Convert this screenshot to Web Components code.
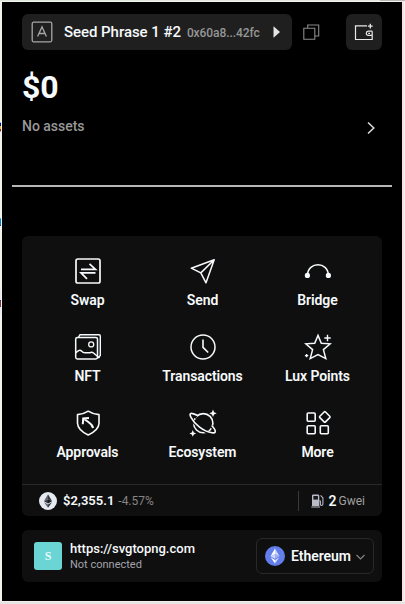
<!DOCTYPE html>
<html lang="en">
<head>
<meta charset="utf-8">
<title>Wallet</title>
<style>
html,body{margin:0;height:100%;overflow:hidden;background:#f0f0eb}
body{font-family:Roboto,"Liberation Sans",sans-serif;color:#f7fafc}
</style>
</head>
<body>
<wallet-popup>
  <account-bar name="Seed Phrase 1 #2" address="0x60a8...42fc"></account-bar>
  <balance-summary amount="$0">No assets</balance-summary>
  <action-panel>
    <action-item icon="swap">Swap</action-item>
    <action-item icon="send">Send</action-item>
    <action-item icon="bridge">Bridge</action-item>
    <action-item icon="nft">NFT</action-item>
    <action-item icon="clock">Transactions</action-item>
    <action-item icon="star">Lux Points</action-item>
    <action-item icon="shield">Approvals</action-item>
    <action-item icon="planet">Ecosystem</action-item>
    <action-item icon="more">More</action-item>
    <market-strip slot="footer" price="$2,355.1" change="-4.57%" gas="2"></market-strip>
  </action-panel>
  <site-connection site="https://svgtopng.com" state="Not connected" chain="Ethereum"></site-connection>
</wallet-popup>
<script>
const S = (w, h, vb, body) => `<svg width="${w}" height="${h}" viewBox="${vb}" fill="none" stroke="currentColor">${body}</svg>`;
const define = (tag, render) => customElements.define(tag, class extends HTMLElement {
  constructor() { super(); this.attachShadow({mode: 'open'}); }
  connectedCallback() { this.shadowRoot.innerHTML = render(n => this.getAttribute(n)); }
});

const icons = {
  swap: '<rect x="2" y="2" width="24" height="24" rx="1.8" stroke-width="1.7"/><path d="M7 12.4H21.5L15.5 6.8M21.5 15.8H7L13 21.9" stroke-width="1.7"/>',
  send: '<path d="M25.2 2.8L2.3 11.2L11.8 15.9L17 25.8ZM11.8 15.9L25 3" stroke-width="1.5" stroke-linejoin="round"/>',
  bridge: '<path d="M3.4 18.4C3.9 4.2 24 4.2 24.4 18.4" stroke-width="1.5"/><circle cx="3.4" cy="18.4" r="2.6" fill="currentColor" stroke="none"/><circle cx="24.4" cy="18.4" r="2.6" fill="currentColor" stroke="none"/>',
  nft: '<path d="M4.6 4.2L6 1.7H25Q26.3 1.7 26.3 3V22.5L24 25" stroke-width="1.4"/><rect x="1.7" y="4.5" width="21.8" height="21.5" rx="1.7" stroke-width="1.5"/><circle cx="17.2" cy="11.4" r="2.5" stroke-width="1.3"/><path d="M1.8 19.7L4.6 17.6Q6.2 16.7 7.6 18.1Q9.3 20.3 12 19.7H15.8Q18 18.7 19.5 20L25.5 25" stroke-width="1.5"/>',
  clock: '<circle cx="14" cy="14" r="12" stroke-width="1.5"/><path d="M14 6.5V14.3L19.2 19.5" stroke-width="1.6"/>',
  star: '<path d="M14 2.4L17.3 10.3L26.3 10.8L19.4 16.6L21.8 25.6L14 21.5L6.2 25.6L8.6 16.6L1.7 10.8L10.7 10.3Z" stroke-width="1.5"/><path d="M23.5 1.8V8.2M20.3 5H26.7M2.6 20.9V24.3M.9 22.6H4.3" stroke-width="1.4"/>',
  shield: '<path d="M14.2 2.2C11 4.4 7.8 5.3 3.5 5.6V14.2C3.8 20.2 8.5 23.3 14.2 26C20 23.3 24.8 20.2 25 14.2V5.6C20.8 5.3 17.4 4.4 14.2 2.2Z" stroke-width="1.6" stroke-linejoin="round"/><path d="M8.8 15.3L9.2 9.5L15 8.9M9.2 9.5L14 12.8Q18.5 15.8 19.1 19" stroke-width="2"/>',
  planet: '<circle cx="14.3" cy="14.2" r="9.6" stroke-width="1.6"/><path d="M7.5 8.6C1.8 4.7-.5 3.9 2 8.8C5 14.8 14 23 23 24.2Q30 25 22.6 17.4" stroke="#0f0f0f" stroke-width="3"/><path d="M8.8 6.6C1.6 3.3-.4 3.5 2 8.4C5 14.4 14 22.6 23 23.8Q29.6 24.6 23 16.8" stroke-width="1.6"/><path d="M24 .6L25.1 3.2L27.7 4.3L25.1 5.4L24 8L22.9 5.4L20.3 4.3L22.9 3.2ZM3.8 21L4.8 23.4L7.2 24.4L4.8 25.4L3.8 27.8L2.8 25.4L.4 24.4L2.8 23.4Z" fill="currentColor" stroke="none"/>',
  more: '<g stroke-width="1.6"><rect x="3.2" y="4" width="8" height="8.2" rx="1"/><rect x="3.2" y="16.8" width="8" height="8" rx="1"/><rect x="16.3" y="16.8" width="8" height="8" rx="1"/><rect x="16.8" y="3.9" width="8" height="8" rx="1" transform="rotate(45 20.8 7.9)"/></g>'
};

const ether = (size, disc, top, mid, low) => S(size, size, '0 0 20 20',
  `<g stroke="none"><circle cx="10" cy="10" r="10" fill="${disc}"/><path d="M10 2.4L5.5 10.2L10 8.2Z" fill="${top}"/><path d="M10 2.4L14.5 10.2L10 8.2Z" fill="${mid}"/><path d="M10 8.2L5.5 10.2L10 12.8Z" fill="${mid}"/><path d="M10 8.2L14.5 10.2L10 12.8Z" fill="${low}"/><path d="M5.5 11.3L10 17.6V14Z" fill="${top}"/><path d="M14.5 11.3L10 17.6V14Z" fill="${mid}"/></g>`);

define('wallet-popup', () => `<style>
  :host{display:block;box-sizing:border-box;position:relative;width:405px;height:604px;padding:2px 3px 3px 2px;
    background:linear-gradient(#f5e9e9,#f5e9e9) 0 601px/405px 1px no-repeat,linear-gradient(#e1e3e0,#e8e8e5) 0 602px/405px 2px no-repeat,linear-gradient(90deg,#dde6da 0 148px,#e2e6df 148px 380px,#b7b7b7 380px) 0 0/405px 1px no-repeat,linear-gradient(#fbdfe3,#fbdfe3) 402px 0/2px 604px no-repeat,#f3f2ed}
  main{box-sizing:border-box;height:599px;background:#000;padding:12px 20px 0;display:flex;flex-direction:column}
  i{position:absolute;left:0;width:1px}
  .a{top:122px;height:10px;background:linear-gradient(#7bc7eb 0 1px,#001a80 1px 4px,#f5b52c 4px 7px,#b51a00 7px 9px,#72b9d6 9px)}
  .b{top:218px;height:8px;background:linear-gradient(#4eb2df 0 1px,#0583c6 1px 7px,#173c72 7px)}
  .c{top:289px;height:26px;background:linear-gradient(#e6e9f1 0 11px,#342a66 11px 12px,#873a41 12px 18px,#e6e9f1 18px)}
  </style><main><slot></slot></main><i class="a"></i><i class="b"></i><i class="c"></i>`);

define('account-bar', a => `<style>
  :host{display:flex;align-items:center;height:36px}
  .pill{box-sizing:border-box;width:270px;height:36px;border-radius:6px;background:#1f1f1f;display:flex;align-items:center;padding:0 11px 0 9px}
  svg{display:block;flex:none}
  .name{font-size:15px;font-weight:500;margin-left:11px;white-space:nowrap;letter-spacing:-.05px}
  .addr{font-size:12px;font-weight:500;color:#969696;margin:1px auto 0 6px;letter-spacing:-.08px}
  .copy{margin-left:11px;color:#8a8a8a}
  .add{width:36px;height:36px;border-radius:6px;background:#1f1f1f;margin-left:auto;display:grid;place-items:center;color:#e8e8e8}
  </style><div class="pill">
  ${S(22,22,'0 0 22 22','<g stroke="#a6a6a6"><rect x="1.2" y="1.2" width="19.6" height="19.6" rx="1.5" stroke-width="1.3"/><path d="M6.6 15.4L11 5.9L15.4 15.4M8.2 12.5H13.8" stroke-width="1.3"/></g>')}
  <span class="name">${a('name')}</span><span class="addr">${a('address')}</span>
  ${S(9,14,'0 0 9 14','<path d="M1.5 1.2L8 7L1.5 12.8Z" fill="#e4e4e4" stroke="none"/>')}</div>
  <span class="copy">${S(17,17,'0 0 17 17','<path d="M.8 4.2H11.8V15.2H.8ZM4.7 4V1H15.7V12H12" stroke-width="1.1"/>')}</span>
  <span class="add">${S(20,20,'0 0 20 20','<path d="M13 3.9H1.5V17.5H18.2V9.2M18.2 9.2H14.4Q12.3 9.4 12.3 11.3Q12.3 13.4 14.4 13.4H18" stroke-width="1.2"/><path d="M14.2 11.3H16M16.3 1.8V6.6M13.9 4.2H18.7" stroke-width="1.3"/>')}</span>`);

define('balance-summary', a => `<style>
  :host{display:block;height:186px}
  .amount{font-size:32px;font-weight:700;line-height:38px;margin-top:18px;letter-spacing:-.2px}
  .row{display:flex;align-items:center;justify-content:space-between;height:20px;margin-top:10px;padding-right:6px;font-size:14px;font-weight:500;letter-spacing:-.02px;color:#989898}
  svg{display:block;margin-top:3px;color:#ddd}
  hr{border:0;height:2px;background:#b6b6b6;margin:49px -10px 0}
  </style><div class="amount">${a('amount')}</div>
  <div class="row"><slot></slot>${S(10,14,'0 0 10 14','<path d="M2 1.5L7.8 7L2 12.5" stroke-width="1.5"/>')}</div><hr>`);

define('action-panel', () => `<style>
  :host{display:flex;flex-direction:column;box-sizing:border-box;height:280px;border-radius:6px;background:#0f0f0f}
  .grid{display:grid;grid-template-columns:repeat(3,115px);grid-auto-rows:76px;justify-content:center;padding-top:20px;height:228px}
  </style><div class="grid"><slot></slot></div><slot name="footer"></slot>`);

define('action-item', a => `<style>
  :host{display:flex;flex-direction:column;align-items:center;padding:1px 0 0 1px;font-size:14px;font-weight:600;line-height:18px;letter-spacing:-.1px}
  svg{display:block;margin:0 0 6px}
  </style>${S(28,28,'0 0 28 28',icons[a('icon')])}<span><slot></slot></span>`);

define('market-strip', a => `<style>
  :host{display:flex;align-items:center;box-sizing:border-box;height:32px;border-top:1px solid #292929;padding:0 17px;font-size:13px}
  svg{display:block}
  b{font-weight:600;margin-left:6px;font-size:13px}
  .chg{font-size:12px;color:#858585;margin-left:4px}
  .gas{margin-left:auto;height:20px;border-left:1px solid #3a3a3a;display:flex;align-items:center;padding-left:12px}
  .gas span{font-size:12px;color:#a0a0a0;margin-left:2px}
  .gas b{margin-left:5px;font-size:14px}
  </style>${ether(18,'#e5eaf3','#62656b','#34363c','#17191e')}<b>${a('price')}</b><span class="chg">${a('change')}</span>
  <div class="gas">${S(13,14,'0 0 13 14','<path d="M.3 12.4H9V13.6H.3ZM1 12V1.7Q1 .5 2.2 .5H7Q8.3 .5 8.3 1.7V12Z" fill="#b8bbc5" stroke="none"/><path d="M2.4 2H6.9V5.6H2.4Z" fill="#17181b" stroke="none"/><path d="M8.2 7H9.4V10Q9.5 11.7 10.7 11.5Q12 11.3 11.9 9.8V4L9.6 1.4" stroke="#b8bbc5" stroke-width="1.1"/>')}<b>${a('gas')}</b><span>Gwei</span></div>`);

define('site-connection', a => `<style>
  :host{display:flex;align-items:center;box-sizing:border-box;height:52px;margin-top:14px;border-radius:6px;background:#0f0f0f;padding:0 8px 0 12px}
  .logo{width:28px;height:28px;border-radius:3px;background:#6bd5d5;display:grid;place-items:center;font:bold 12px/27px "Liberation Serif",serif;color:#e8fbfb}
  .text{margin-left:8px}
  .site{font-size:13px;font-weight:500;line-height:18px}
  .state{font-size:11px;line-height:14px;color:#a2a2ab}
  .chain{box-sizing:border-box;margin-left:auto;width:118px;height:36px;border:1px solid #292929;border-radius:6px;display:flex;align-items:center;padding:0 7px 0 8px;font-size:14px;font-weight:600;letter-spacing:-.05px}
  .chain span{margin:0 auto 1px 6px}
  .chain svg:last-child{margin-top:2px}
  svg{display:block}
  </style><div class="logo">S</div><div class="text"><div class="site">${a('site')}</div><div class="state">${a('state')}</div></div>
  <div class="chain">${ether(20,'#627eea','#ffffff','#cfd8fa','#9fb0f2')}<span>${a('chain')}</span>${S(11,8,'0 0 11 8','<path d="M1.5 2L5.5 6L9.5 2" stroke="#858585" stroke-width="1.2"/>')}</div>`);
</script>
</body>
</html>
